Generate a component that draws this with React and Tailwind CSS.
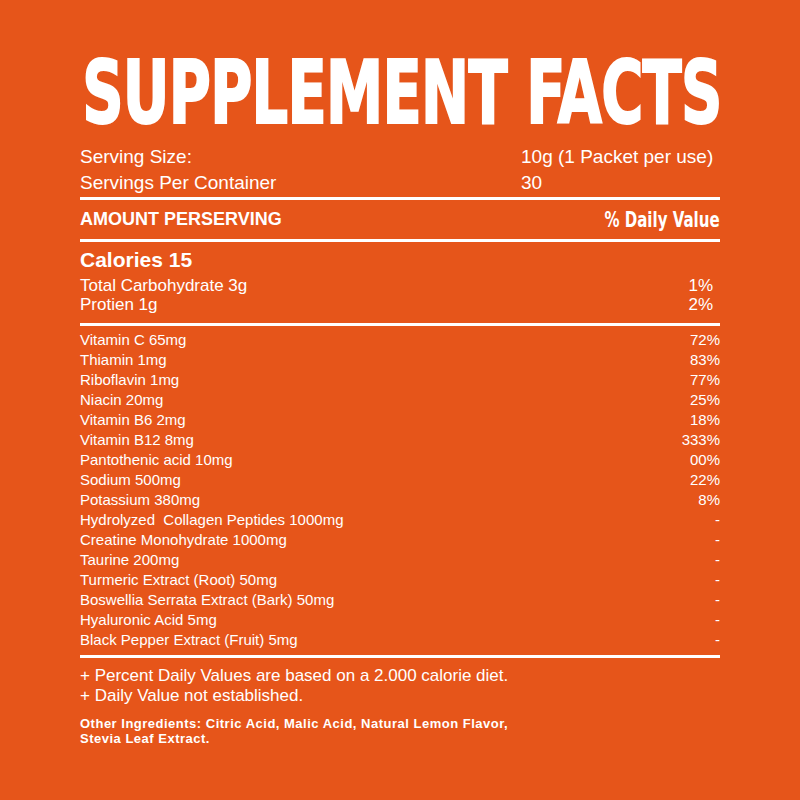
import React from 'react';

const items = [
  ['Vitamin C 65mg', '72%'],
  ['Thiamin 1mg', '83%'],
  ['Riboflavin 1mg', '77%'],
  ['Niacin 20mg', '25%'],
  ['Vitamin B6 2mg', '18%'],
  ['Vitamin B12 8mg', '333%'],
  ['Pantothenic acid 10mg', '00%'],
  ['Sodium 500mg', '22%'],
  ['Potassium 380mg', '8%'],
  ['Hydrolyzed\u00a0 Collagen Peptides 1000mg', '-'],
  ['Creatine Monohydrate 1000mg', '-'],
  ['Taurine 200mg', '-'],
  ['Turmeric Extract (Root) 50mg', '-'],
  ['Boswellia Serrata Extract (Bark) 50mg', '-'],
  ['Hyaluronic Acid 5mg', '-'],
  ['Black Pepper Extract (Fruit) 5mg', '-'],
];

const Rule = ({ className = '' }) => <div className={`h-[3px] bg-white ${className}`} />;

const App = () => {
  return (
    <div className="w-[800px] h-[800px] bg-[#E6551A] text-white px-[80px] pt-[50px] font-['Liberation_Sans',Arial,sans-serif] overflow-hidden">
      {/* titre */}
      <div className="h-[94px] whitespace-nowrap">
        <h1 className="block origin-left scale-x-[0.726] text-[88px] leading-[76px] pt-[5px] pl-[3px] font-bold tracking-[-1px] [-webkit-text-stroke:2px_#fff] font-['DejaVu_Sans_Condensed','DejaVu_Sans',sans-serif] [font-stretch:condensed]">
          SUPPLEMENT FACTS
        </h1>
      </div>

      {/* portions */}
      <div className="text-[19px]">
        <div className="flex h-[26px] items-center">
          <span className="w-[441px]">Serving Size:</span>
          <span>10g (1 Packet per use)</span>
        </div>
        <div className="flex h-[26px] items-center">
          <span className="w-[441px]">Servings Per Container</span>
          <span>30</span>
        </div>
      </div>
      <Rule className="mt-[1px]" />

      <div className="flex h-[39px] items-center justify-between">
        <span className="text-[18px] font-bold">AMOUNT PERSERVING</span>
        <span className="inline-block origin-right scale-x-[0.76] whitespace-nowrap text-[22px] font-bold font-['DejaVu_Sans_Condensed','DejaVu_Sans',sans-serif] [font-stretch:condensed]">
          % Daily Value
        </span>
      </div>
      <Rule />

      {/* calories */}
      <div className="mt-[2px] flex h-[32px] items-center text-[21px] font-bold">Calories 15</div>
      <div className="text-[17px] pr-[7px]">
        <div className="flex h-[19px] items-center justify-between">
          <span>Total Carbohydrate 3g</span>
          <span>1%</span>
        </div>
        <div className="flex h-[19px] items-center justify-between">
          <span>Protien 1g</span>
          <span>2%</span>
        </div>
      </div>
      <Rule className="mt-[9px]" />

      {/* nutriments */}
      <div className="mt-[4px] text-[15px]">
        {items.map(([name, val]) => (
          <div key={name} className="flex h-[20px] items-center justify-between">
            <span>{name}</span>
            <span>{val}</span>
          </div>
        ))}
      </div>
      <Rule className="mt-[5px]" />

      {/* notes */}
      <div className="mt-[8px] text-[17px]">
        <div className="flex h-[20px] items-center">+ Percent Daily Values are based on a 2.000 calorie diet.</div>
        <div className="flex h-[20px] items-center">+ Daily Value not established.</div>
      </div>
      <div className="mt-[10px] text-[13px] font-bold leading-[15px] tracking-[0.5px]">
        <div>Other Ingredients: Citric Acid, Malic Acid, Natural Lemon Flavor,</div>
        <div>Stevia Leaf Extract.</div>
      </div>
    </div>
  );
};

export default App;
